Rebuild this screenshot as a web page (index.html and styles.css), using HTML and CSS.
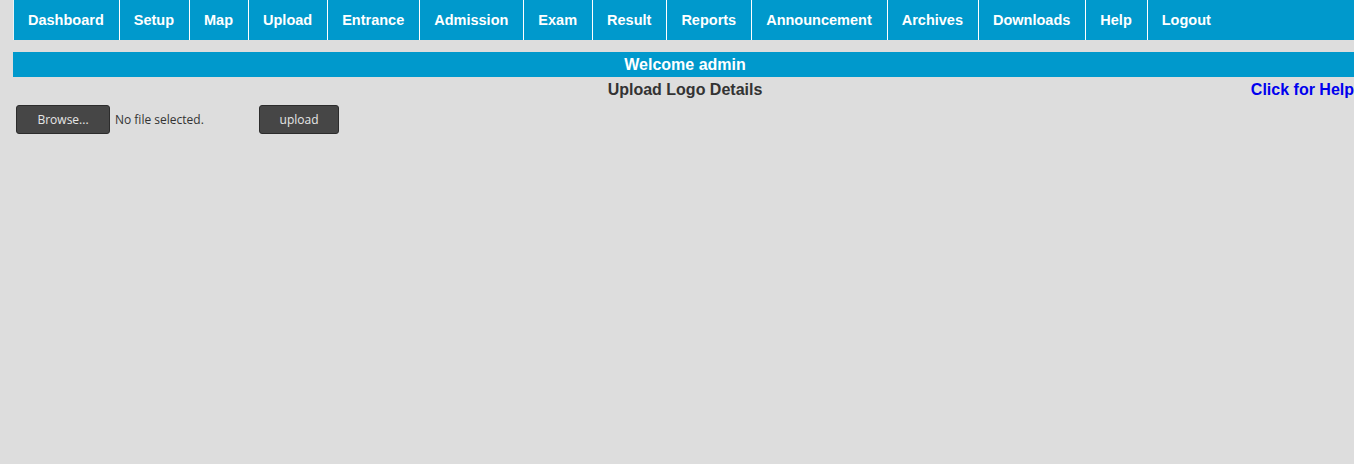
FILE: index.html
```html
<!DOCTYPE html>
<html>
<head>
<meta charset="utf-8">
<link rel="stylesheet" href="styles.css">
</head>
<body>
<div class="page">
  <ul class="nav">
    <li>Dashboard</li>
    <li>Setup</li>
    <li>Map</li>
    <li>Upload</li>
    <li>Entrance</li>
    <li>Admission</li>
    <li>Exam</li>
    <li>Result</li>
    <li>Reports</li>
    <li>Announcement</li>
    <li>Archives</li>
    <li>Downloads</li>
    <li>Help</li>
    <li class="last">Logout</li>
  </ul>
  <div class="welcome">Welcome admin</div>
  <div class="titlerow">
    <span class="title">Upload Logo Details</span>
    <a class="help" href="#">Click for Help</a>
  </div>
  <div class="form">
    <span class="btn browse">Browse...</span>
    <span class="nofile">No file selected.</span>
    <span class="btn upload">upload</span>
  </div>
</div>
</body>
</html>
```
FILE: styles.css
```css
html, body {
  margin: 0;
  padding: 0;
  overflow: hidden;
  background: #dddddd;
}
body {
  font-family: "Liberation Sans", Arial, sans-serif;
}
.page {
  margin-left: 13px;
  width: 1344px;
}
.nav {
  list-style: none;
  margin: 0;
  padding: 0;
  display: flex;
  height: 40px;
  background: #0099cc;
  border-left: 1px solid #e8f4f8;
}
.nav li {
  color: #fff;
  font-weight: bold;
  font-size: 14.5px;
  line-height: 40px;
  padding: 0 15px 0 14px;
  border-right: 1px solid #fff;
}
.nav li.last {
  border-right: none;
}
.welcome {
  margin-top: 12px;
  height: 25px;
  line-height: 25px;
  background: #0099cc;
  color: #fff;
  font-weight: bold;
  font-size: 16px;
  text-align: center;
}
.titlerow {
  position: relative;
  height: 26px;
  line-height: 26px;
  text-align: center;
  font-size: 16px;
  font-weight: bold;
}
.title {
  color: #333333;
}
.help {
  position: absolute;
  right: 3px;
  top: 0;
  color: #0000ee;
  text-decoration: none;
}
.form {
  display: flex;
  align-items: center;
  padding-left: 3px;
  margin-top: 2px;
  font-family: "Open Sans", "Noto Sans", sans-serif;
  font-size: 12px;
}
.btn {
  box-sizing: border-box;
  height: 29px;
  line-height: 27px;
  background: #464646;
  border: 1px solid #2c2c2c;
  border-radius: 3px;
  color: #e6e6e6;
  text-align: center;
}
.browse {
  width: 94px;
}
.nofile {
  color: #333;
  margin-left: 5px;
  width: 144px;
}
.upload {
  width: 80px;
}
```
